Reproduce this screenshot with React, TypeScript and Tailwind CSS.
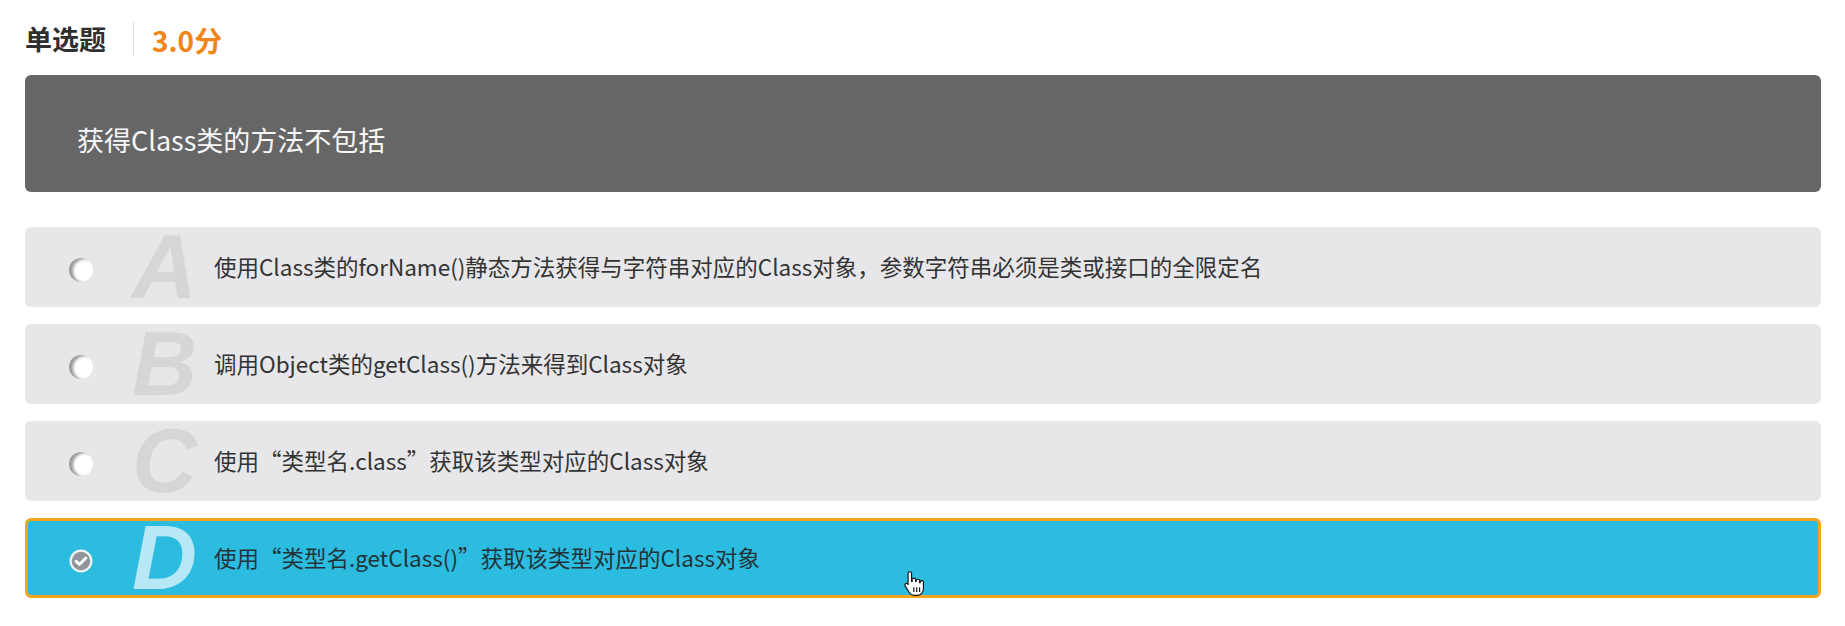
import React from 'react';

type Option = {
  key: string;
  text: string;
};

const options: Option[] = [
  { key: 'A', text: '使用Class类的forName()静态方法获得与字符串对应的Class对象，参数字符串必须是类或接口的全限定名' },
  { key: 'B', text: '调用Object类的getClass()方法来得到Class对象' },
  { key: 'C', text: '使用“类型名.class”获取该类型对应的Class对象' },
  { key: 'D', text: '使用“类型名.getClass()”获取该类型对应的Class对象' },
];

const selected = 'D';

function Radio({ checked }: { checked: boolean }) {
  if (checked) {
    return (
      <svg width="24" height="24" viewBox="0 0 22 22" className="shrink-0 mt-[6px]">
        <circle cx="11" cy="11" r="9.5" fill="#8e9699" stroke="#f4f4f4" strokeWidth="2" />
        <path d="M6.5 11.2l3 3 6-6" fill="none" stroke="#ffffff" strokeWidth="2.6" strokeLinecap="round" strokeLinejoin="round" />
      </svg>
    );
  }
  return (
    <div className="w-[24px] h-[24px] shrink-0 mt-[6px] rounded-full bg-white shadow-[inset_4px_1px_3px_rgba(0,0,0,0.4)]" />
  );
}

function HandCursor() {
  return (
    <svg width="26" height="30" viewBox="0 0 22 26" className="absolute left-[902px] top-[570px]">
      <path
        d="M6.5 1.5c.8 0 1.5.7 1.5 1.5v7h.5V8.5c0-.8.7-1.4 1.5-1.4s1.5.6 1.5 1.4V10h.5V9.3c0-.8.7-1.3 1.5-1.3s1.5.5 1.5 1.3V11h.5v-.5c0-.8.6-1.3 1.4-1.3.8 0 1.4.5 1.4 1.3V16c0 3-2 6-5 6H10c-2 0-3-1-4-2.5L2.5 14c-.5-.8-.3-1.7.4-2.1.7-.4 1.6-.2 2.1.5L5 13V3c0-.8.7-1.5 1.5-1.5z"
        fill="#ffffff"
        stroke="#111"
        strokeWidth="1"
      />
      <path d="M10 15v4M12.5 15v4M15 15v4" stroke="#111" strokeWidth="1" />
    </svg>
  );
}

export default function App() {
  return (
    <div
      className="relative min-h-[626px] bg-white pl-[25px] pr-[24px] pt-[21px] text-[#333]"
      style={{ fontFamily: '"Noto Sans CJK SC", "Noto Sans", sans-serif' }}
    >
      {/* header: type + score */}
      <div className="flex items-center h-[37px]">
        <span className="text-[27px] font-bold text-[#2f2f2f]">单选题</span>
        <div className="w-px h-[35px] bg-[#dddddd] ml-[27px]" />
        <span className="text-[28px] font-bold text-[#f08519] ml-[18px]">3.0分</span>
      </div>

      {/* question */}
      <div className="mt-[17px] h-[117px] rounded-[6px] bg-[#666666] pl-[52px] pt-[14px] flex items-center text-[27px] text-[#f7f7f7]">
        获得Class类的方法不包括
      </div>

      {/* options */}
      <div className="mt-[35px] flex flex-col gap-[17px]">
        {options.map((o) => {
          const on = o.key === selected;
          return (
            <div
              key={o.key}
              className={
                on
                  ? 'h-[80px] rounded-[6px] flex items-center pl-[41px] bg-[#2bbcdf] border-[3px] border-[#f2a41c]'
                  : 'h-[80px] rounded-[6px] flex items-center pl-[44px] bg-[#e7e6e9]'
              }
            >
              <Radio checked={on} />
              <span
                className={
                  on
                    ? 'ml-[39px] w-[78px] shrink-0 text-[90px] leading-[74px] font-bold italic text-[#b8e8f5]'
                    : 'ml-[39px] w-[78px] shrink-0 text-[90px] leading-[78px] font-bold italic text-[#d6d5d8]'
                }
                style={{ fontFamily: '"Liberation Sans", Arial, sans-serif' }}
              >
                {o.key}
              </span>
              <span className={on ? 'ml-[4px] text-[22.5px] text-[#243338]' : 'ml-[4px] text-[22.5px] text-[#333]'}>
                {o.text}
              </span>
            </div>
          );
        })}
      </div>

      <HandCursor />
    </div>
  );
}
